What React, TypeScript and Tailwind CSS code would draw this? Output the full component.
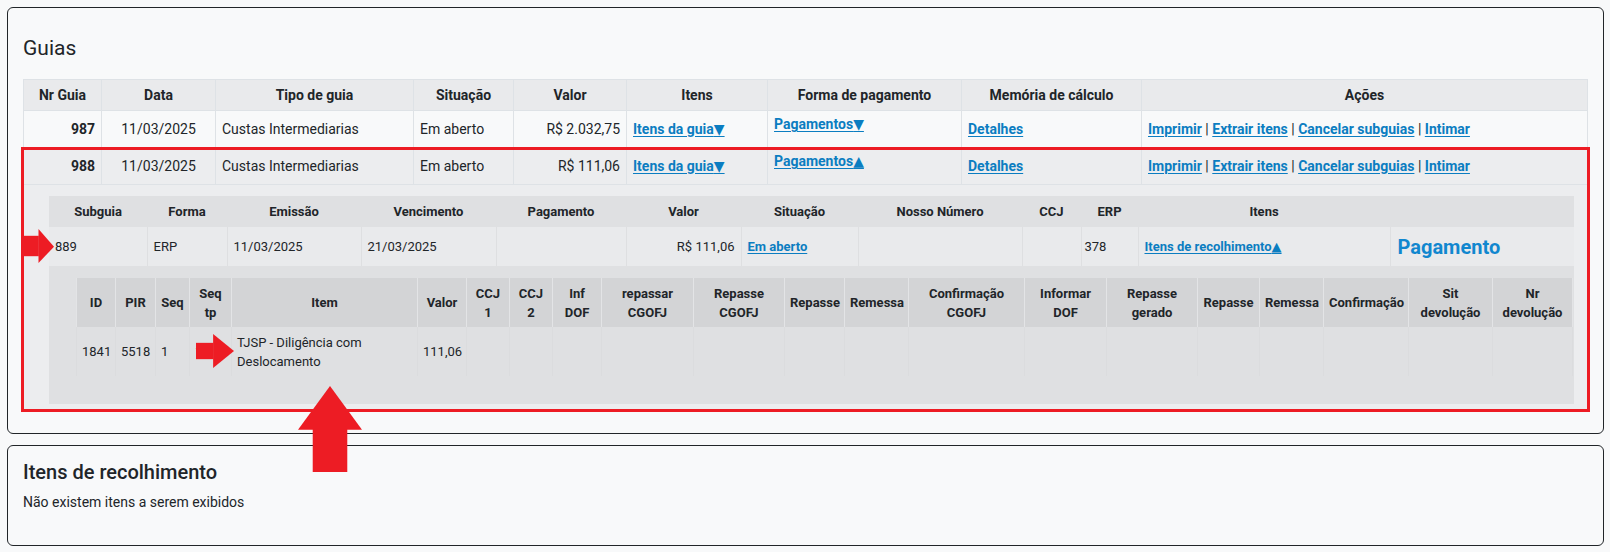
import React from 'react';

const mainCols = [
  { label: 'Nr Guia', w: 'w-[78px]' },
  { label: 'Data', w: 'w-[114px]' },
  { label: 'Tipo de guia', w: 'w-[198px]' },
  { label: 'Situação', w: 'w-[100px]' },
  { label: 'Valor', w: 'w-[113px]' },
  { label: 'Itens', w: 'w-[141px]' },
  { label: 'Forma de pagamento', w: 'w-[194px]' },
  { label: 'Memória de cálculo', w: 'w-[180px]' },
  { label: 'Ações', w: '' },
];

const subCols = [
  { label: 'Subguia', w: 'w-[98px]' },
  { label: 'Forma', w: 'w-[80px]' },
  { label: 'Emissão', w: 'w-[134px]' },
  { label: 'Vencimento', w: 'w-[135px]' },
  { label: 'Pagamento', w: 'w-[130px]' },
  { label: 'Valor', w: 'w-[115px]' },
  { label: 'Situação', w: 'w-[117px]' },
  { label: 'Nosso Número', w: 'w-[164px]' },
  { label: 'CCJ', w: 'w-[59px]' },
  { label: 'ERP', w: 'w-[57px]' },
  { label: 'Itens', w: 'w-[252px]' },
  { label: '', w: '' },
];

const itemCols = [
  { label: 'ID', w: 'w-[39px]' },
  { label: 'PIR', w: 'w-[40px]' },
  { label: 'Seq', w: 'w-[34px]' },
  { label: 'Seq tp', w: 'w-[42px]' },
  { label: 'Item', w: 'w-[186px]' },
  { label: 'Valor', w: 'w-[49px]' },
  { label: 'CCJ 1', w: 'w-[43px]' },
  { label: 'CCJ 2', w: 'w-[43px]' },
  { label: 'Inf DOF', w: 'w-[49px]' },
  { label: 'repassar CGOFJ', w: 'w-[92px]' },
  { label: 'Repasse CGOFJ', w: 'w-[91px]' },
  { label: 'Repasse', w: 'w-[60px]' },
  { label: 'Remessa', w: 'w-[64px]' },
  { label: 'Confirmação CGOFJ', w: 'w-[116px]' },
  { label: 'Informar DOF', w: 'w-[82px]' },
  { label: 'Repasse gerado', w: 'w-[91px]' },
  { label: 'Repasse', w: 'w-[62px]' },
  { label: 'Remessa', w: 'w-[64px]' },
  { label: 'Confirmação', w: 'w-[85px]' },
  { label: 'Sit devolução', w: 'w-[84px]' },
  { label: 'Nr devolução', w: '' },
];

const itemRow = ['1841', '5518', '1', '1', 'TJSP - Diligência com Deslocamento', '111,06'];

const link = 'font-bold text-[#0b7dc1] underline underline-offset-2';
const td = 'border border-[#dee2e6] px-[6px]';

function Tri({ up }: { up?: boolean }) {
  return <span className="font-['DejaVu_Sans',sans-serif]">{up ? '▲' : '▼'}</span>;
}

function Acoes() {
  return (
    <>
      <a className={link}>Imprimir</a> | <a className={link}>Extrair itens</a> |{' '}
      <a className={link}>Cancelar subguias</a> | <a className={link}>Intimar</a>
    </>
  );
}

function ItemsTable() {
  return (
    <table className="w-full table-fixed border-collapse text-[13px] leading-[19px]">
      <colgroup>
        {itemCols.map((c, i) => (
          <col key={i} className={c.w} />
        ))}
      </colgroup>
      <thead>
        <tr className="bg-[#d3d4d6]">
          {itemCols.map((c, i) => (
            <th key={i} className="border-x border-[#e3e4e6] px-[5px] py-[5.5px] text-center font-bold">
              {c.label}
            </th>
          ))}
        </tr>
      </thead>
      <tbody>
        <tr className="bg-[#dfe0e2]">
          {itemCols.map((_, i) => (
            <td key={i} className="border-x border-[#dbdcde] px-[5px] py-[5.5px]">
              {itemRow[i] ?? ''}
            </td>
          ))}
        </tr>
      </tbody>
    </table>
  );
}

function SubguiaTable() {
  return (
    <table className="w-full table-fixed border-collapse text-[13px] leading-[19px]">
      <colgroup>
        {subCols.map((c, i) => (
          <col key={i} className={c.w} />
        ))}
      </colgroup>
      <thead>
        <tr className="h-[31px] bg-[#dfe0e2]">
          {subCols.map((c, i) => (
            <th key={i} className="px-[6px] text-center font-bold">
              {c.label}
            </th>
          ))}
        </tr>
      </thead>
      <tbody>
        <tr className="h-[39px] bg-[#e9eaec]">
          <td className="border-r border-[#dedfe1] px-[6px]">889</td>
          <td className="border-r border-[#dedfe1] px-[6px]">ERP</td>
          <td className="border-r border-[#dedfe1] px-[6px]">11/03/2025</td>
          <td className="border-r border-[#dedfe1] px-[6px]">21/03/2025</td>
          <td className="border-r border-[#dedfe1] px-[6px]"></td>
          <td className="border-r border-[#dedfe1] px-[6px] text-right">R$ 111,06</td>
          <td className="border-r border-[#dedfe1] px-[6px]">
            <a className={link}>Em aberto</a>
          </td>
          <td className="border-r border-[#dedfe1] px-[6px]"></td>
          <td className="border-r border-[#dedfe1] px-[6px]"></td>
          <td className="border-r border-[#dedfe1] px-[3px]">378</td>
          <td className="border-r border-[#dedfe1] px-[6px]">
            <a className={link}>
              Itens de recolhimento
              <Tri up />
            </a>
          </td>
          <td className="px-[7px]">
            <a className="text-[20px] font-bold leading-[24px] text-[#1187cf]">Pagamento</a>
          </td>
        </tr>
        <tr>
          <td colSpan={12} className="bg-[#dfe0e2] pb-[28px] pl-[27px] pr-[1px] pt-[12px]">
            <ItemsTable />
          </td>
        </tr>
      </tbody>
    </table>
  );
}

function Arrow({ className, points, shaft }: { className: string; points: string; shaft: string }) {
  return (
    <svg className={`pointer-events-none absolute ${className}`} viewBox="0 0 100 100" preserveAspectRatio="none">
      <polygon points={points} fill="#ed1c24" />
      <polygon points={shaft} fill="#ed1c24" />
    </svg>
  );
}

export default function App() {
  return (
    <div className="relative min-h-[552px] bg-[#f8f9fa] pl-[7px] pr-[6px] pt-[7px] font-['Roboto',sans-serif] text-[14px] text-[#212529]">
      <section className="rounded-[6px] border border-[#212529] px-[15px] pb-[23px] pt-[28px]">
        <h4 className="text-[21px] font-normal leading-[25px]">Guias</h4>
        <table className="mt-[18px] w-full table-fixed border-collapse leading-[21px]">
          <colgroup>
            {mainCols.map((c, i) => (
              <col key={i} className={c.w} />
            ))}
          </colgroup>
          <thead>
            <tr className="h-[31px] bg-[#e9eaec]">
              {mainCols.map((c) => (
                <th key={c.label} className={`${td} text-center font-bold`}>
                  {c.label}
                </th>
              ))}
            </tr>
          </thead>
          <tbody>
            <tr className="h-[37px] bg-[#f8f9fa]">
              <td className={`${td} text-right font-bold`}>987</td>
              <td className={`${td} text-center`}>11/03/2025</td>
              <td className={td}>Custas Intermediarias</td>
              <td className={td}>Em aberto</td>
              <td className={`${td} text-right`}>R$ 2.032,75</td>
              <td className={td}>
                <a className={link}>
                  Itens da guia
                  <Tri />
                </a>
              </td>
              <td className={`${td} pt-[3px] align-top`}>
                <a className={link}>
                  Pagamentos
                  <Tri />
                </a>
              </td>
              <td className={td}>
                <a className={link}>Detalhes</a>
              </td>
              <td className={td}>
                <Acoes />
              </td>
            </tr>
            <tr className="h-[37px] bg-[#ecedef]">
              <td className={`${td} text-right font-bold`}>988</td>
              <td className={`${td} text-center`}>11/03/2025</td>
              <td className={td}>Custas Intermediarias</td>
              <td className={td}>Em aberto</td>
              <td className={`${td} text-right`}>R$ 111,06</td>
              <td className={td}>
                <a className={link}>
                  Itens da guia
                  <Tri />
                </a>
              </td>
              <td className={`${td} pt-[3px] align-top`}>
                <a className={link}>
                  Pagamentos
                  <Tri up />
                </a>
              </td>
              <td className={td}>
                <a className={link}>Detalhes</a>
              </td>
              <td className={td}>
                <Acoes />
              </td>
            </tr>
            <tr className="bg-[#ecedef]">
              <td colSpan={9} className="border border-[#dee2e6] pb-[5px] pl-[25px] pr-[13px] pt-[11px]">
                <SubguiaTable />
              </td>
            </tr>
          </tbody>
        </table>
      </section>

      <section className="mt-[11px] rounded-[6px] border border-[#212529] px-[15px] pb-[32px] pt-[14px]">
        <h5 className="text-[20px] font-medium leading-[24px]">Itens de recolhimento</h5>
        <p className="mt-[8px] leading-[21px]">Não existem itens a serem exibidos</p>
      </section>

      {/* annotations drawn over the screenshot */}
      <div className="pointer-events-none absolute left-[21px] top-[147px] h-[265px] w-[1569px] border-[3px] border-[#ed1c24]" />
      <Arrow
        className="left-[23px] top-[229px] h-[34px] w-[31px]"
        points="50,0 100,52 50,100"
        shaft="0,20 51,20 51,80 0,80"
      />
      <Arrow
        className="left-[196px] top-[334px] h-[34px] w-[38px]"
        points="45,0 100,50 45,100"
        shaft="0,26 46,26 46,74 0,74"
      />
      <Arrow
        className="left-[298px] top-[386px] h-[86px] w-[64px]"
        points="0,51 50,0 100,51"
        shaft="23,50 77,50 77,100 23,100"
      />
    </div>
  );
}
